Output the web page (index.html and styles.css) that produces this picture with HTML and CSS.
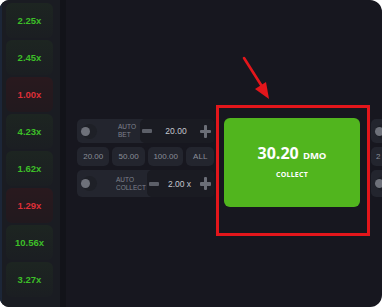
FILE: index.html
```html
<!DOCTYPE html>
<html lang="en">
<head>
    <meta charset="UTF-8">
    <meta name="viewport" content="width=device-width, initial-scale=1.0">
    <title>Crash - Collect</title>
    <link rel="stylesheet" href="styles.css">
</head>
<body>
    <div class="frame">
        <div class="history">
            <div class="tile win">2.25x</div>
            <div class="tile win">2.45x</div>
            <div class="tile lose">1.00x</div>
            <div class="tile win">4.23x</div>
            <div class="tile win">1.62x</div>
            <div class="tile lose">1.29x</div>
            <div class="tile win">10.56x</div>
            <div class="tile win">3.27x</div>
        </div>
        <div class="main">
            <div class="controls">
                <div class="row">
                    <span class="toggle"></span>
                    <span class="label">AUTO<br>BET</span>
                    <div class="stepper">
                        <span class="minus"></span>
                        <span class="value">20.00</span>
                        <span class="plus"></span>
                    </div>
                </div>
                <div class="chips">
                    <span class="chip">20.00</span>
                    <span class="chip">50.00</span>
                    <span class="chip">100.00</span>
                    <span class="chip">ALL</span>
                </div>
                <div class="row tall">
                    <span class="toggle"></span>
                    <span class="label">AUTO<br>COLLECT</span>
                    <div class="stepper narrow">
                        <span class="minus"></span>
                        <span class="value">2.00 x</span>
                        <span class="plus"></span>
                    </div>
                </div>
            </div>
            <div class="highlight">
                <button class="collect">
                    <span class="amount">30.20 <small>DMO</small></span>
                    <span class="caption">COLLECT</span>
                </button>
            </div>
            <div class="controls">
                <div class="row">
                    <span class="toggle"></span>
                </div>
                <div class="chips">
                    <span class="chip first">2</span>
                </div>
                <div class="row tall">
                    <span class="toggle"></span>
                </div>
            </div>
        </div>
        <svg class="arrow" width="40" height="50" viewBox="0 0 40 50">
            <line x1="3" y1="3" x2="22" y2="33" stroke="#e3161b" stroke-width="2.6" stroke-linecap="round"/>
            <polygon points="28,44 14,34 25,27" fill="#e3161b"/>
        </svg>
    </div>
</body>
</html>
```

FILE: styles.css
```css
body {
    margin: 0;
    background: #ffffff;
    font-family: "Liberation Sans", Arial, sans-serif;
}

.frame {
    position: relative;
    width: 382px;
    height: 307px;
    background: #17171f;
    border-radius: 9px 12px 12px 9px;
    overflow: hidden;
    display: flex;
}

.history {
    width: 66px;
    flex-shrink: 0;
    padding: 3px 0 0 6px;
    box-sizing: border-box;
    background: #1a1c22;
    border-left: 2px solid #1c2638;
    border-right: 6px solid #121319;
    display: flex;
    flex-direction: column;
    gap: 2px;
}

.tile {
    width: 47px;
    height: 35px;
    flex-shrink: 0;
    margin-left: -2px;
    border-radius: 6px;
    display: flex;
    align-items: center;
    justify-content: center;
    font-size: 9.5px;
    font-weight: bold;
}

.win {
    background: linear-gradient(#1d2521, #1b1e22);
    color: #3cbf28;
}

.lose {
    background: linear-gradient(#29191e, #21191e);
    color: #dc2f38;
}

.main {
    flex: 1;
    display: flex;
    align-items: flex-start;
    padding-left: 11px;
    gap: 2px;
}

.controls {
    width: 137px;
    flex-shrink: 0;
    margin-top: 119px;
    display: flex;
    flex-direction: column;
    gap: 4px;
}

.controls:last-child {
    margin-left: -1px;
}

.row {
    height: 24px;
    background: #23252e;
    border-radius: 5px;
    display: flex;
    align-items: center;
    padding-left: 4px;
}

.row.tall {
    height: 27px;
}

.toggle {
    width: 9px;
    height: 9px;
    border-radius: 50%;
    background: #6e717a;
    box-shadow: 4px 0 0 3px #1e2027;
    margin-right: 28px;
}

.label {
    color: #7f828d;
    font-size: 6.5px;
    line-height: 8px;
    width: 22px;
}

.tall .label {
    margin-left: -2px;
    width: 32px;
}

.stepper {
    flex: 1;
    height: 100%;
    background: #1a1b22;
    border-radius: 5px;
    display: flex;
    align-items: center;
    padding: 0 3px 0 2px;
}

.stepper.narrow {
    margin-left: -1px;
}

.minus {
    width: 10px;
    height: 4px;
    background: #5c5f68;
    border-radius: 1px;
}

.value {
    flex: 1;
    text-align: center;
    color: #c5c7cf;
    font-size: 8.5px;
}

.plus {
    position: relative;
    width: 11px;
    height: 13px;
}

.plus::before,
.plus::after {
    content: "";
    position: absolute;
    background: #6b6e77;
    border-radius: 1px;
}

.plus::before {
    left: 0;
    top: 5px;
    width: 11px;
    height: 3.5px;
}

.plus::after {
    left: 3.75px;
    top: 0;
    width: 3.5px;
    height: 13px;
}

.chips {
    height: 19px;
    display: flex;
    gap: 3px;
}

.chip {
    flex: 1 1 0;
    background: #23252e;
    border-radius: 5px;
    display: flex;
    align-items: center;
    justify-content: center;
    color: #8a8d98;
    font-size: 8px;
}

.chip:nth-child(3) {
    flex-grow: 1.1;
}

.chip:nth-child(4) {
    flex-grow: 0.85;
}

.chip.first {
    flex: 0 0 auto;
    width: 33px;
    justify-content: flex-start;
    padding-left: 5px;
    box-sizing: border-box;
}

.highlight {
    width: 154px;
    height: 131px;
    flex-shrink: 0;
    box-sizing: border-box;
    margin-top: 105px;
    border: 3px solid #e3161b;
    padding: 10px 7px 0 5px;
}

.collect {
    width: 100%;
    height: 89px;
    border: none;
    border-radius: 6px;
    background: #51b51e;
    color: #ffffff;
    display: flex;
    flex-direction: column;
    align-items: center;
    justify-content: center;
    font-family: "Open Sans", sans-serif;
    font-weight: bold;
    padding: 0 0 4px;
}

.amount {
    font-size: 16px;
    line-height: 20px;
}

.amount small {
    font-size: 9.5px;
}

.caption {
    font-size: 7px;
    margin-top: 4px;
    letter-spacing: 0.2px;
}

.arrow {
    position: absolute;
    left: 241px;
    top: 55px;
}
```
